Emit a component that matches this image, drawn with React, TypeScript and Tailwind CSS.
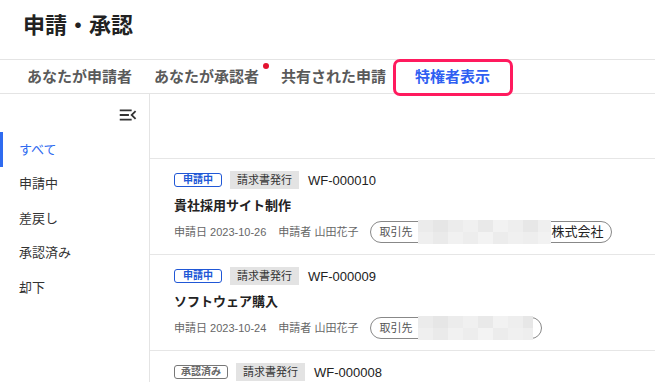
import React from "react";

const blurA = ["#ebebeb", "#e6e6e6", "#ececec", "#f0f0f0", "#e9e9e9", "#f2f2f2", "#eeeeee", "#e7e7e7", "#efefef"];
const blurB = ["#efefef", "#eaeaea", "#f1f1f1", "#ededed", "#f3f3f3", "#ececec", "#f0f0f0", "#eeeeee", "#f2f2f2"];

function Blur({ width }: { width: number }) {
  const cols = Math.ceil(width / 15);
  return (
    <div className="flex h-[24px] flex-col overflow-hidden" style={{ width }}>
      <div className="flex h-[12px]">
        {Array.from({ length: cols }).map((_, i) => (
          <div key={i} className="h-full w-[15px] shrink-0" style={{ background: blurA[i % blurA.length] }} />
        ))}
      </div>
      <div className="flex h-[12px]">
        {Array.from({ length: cols }).map((_, i) => (
          <div key={i} className="h-full w-[15px] shrink-0" style={{ background: blurB[i % blurB.length] }} />
        ))}
      </div>
    </div>
  );
}

type Item = {
  status: string;
  approved?: boolean;
  id: string;
  title: string;
  date: string;
  blurW: number;
  suffix?: string;
};

const items: Item[] = [
  { status: "申請中", id: "WF-000010", title: "貴社採用サイト制作", date: "2023-10-26", blurW: 133, suffix: "株式会社" },
  { status: "申請中", id: "WF-000009", title: "ソフトウェア購入", date: "2023-10-24", blurW: 115 },
  { status: "承認済み", approved: true, id: "WF-000008", title: "", date: "", blurW: 0 },
];

function Card({ it }: { it: Item }) {
  return (
    <div className="h-[96px] shrink-0 border-b border-[#e6e6e6] pl-[24px] pt-[12px]">
      <div className="flex h-[18px] items-center">
        <span
          className={
            it.approved
              ? "flex h-[14px] items-center rounded-[3px] border border-[#777] px-[6px] text-[10px] font-bold leading-none text-[#666]"
              : "flex h-[14px] items-center rounded-[3px] border border-[#2057d6] px-[8px] text-[10px] font-bold leading-none text-[#2057d6]"
          }
        >
          {it.status}
        </span>
        <span className="ml-[8px] flex h-[18px] items-center bg-[#e3e3e3] px-[7px] text-[11px] leading-none text-[#333]">
          請求書発行
        </span>
        <span className="ml-[9px] text-[13px] leading-none text-[#222]">{it.id}</span>
      </div>
      {it.title && (
        <>
          <div className="mt-[8px] h-[18px] text-[13px] font-bold leading-[18px] text-[#222]">{it.title}</div>
          <div className="mt-[6px] flex h-[22px] items-center text-[11px] text-[#666]">
            <span>申請日 {it.date}</span>
            <span className="ml-[12px]">申請者 山田花子</span>
            <div className="ml-[12px] flex h-[22px] items-center rounded-full border border-[#888] pl-[8px] pr-[8px]">
              <span className="mr-[6px] text-[11px] text-[#555]">取引先</span>
              <Blur width={it.blurW} />
              {it.suffix ? (
                <span className="text-[13px] text-[#222]">{it.suffix}</span>
              ) : null}
            </div>
          </div>
        </>
      )}
    </div>
  );
}

export default function App() {
  const side = ["すべて", "申請中", "差戻し", "承認済み", "却下"];
  return (
    <div className="h-[382px] w-[655px] overflow-hidden bg-white font-['Liberation_Sans','Noto_Sans_CJK_JP',sans-serif]">
      <div className="h-[59px] pl-[23px] pt-[12px] text-[22px] font-bold leading-[28px] text-[#222]">申請・承認</div>
      <div className="flex h-[35px] items-center border-y border-[#e4e4e4] pl-[27px] text-[15px] font-bold leading-[33px] text-[#5a5a5a]">
        <div className="w-[127px]">あなたが申請者</div>
        <div className="relative w-[127px]">
          あなたが承認者
          <span className="absolute left-[109px] top-[3px] h-[6px] w-[6px] rounded-full bg-[#e3122f]" />
        </div>
        <div className="w-[134px]">共有された申請</div>
        <div className="relative text-[#2f5ff2]">
          特権者表示
          <span className="absolute -left-[22px] -right-[23px] -top-[1px] -bottom-[3px] rounded-[7px] border-[3px] border-[#ff1a5e]" />
        </div>
      </div>
      <div className="flex h-[288px]">
        <div className="w-[150px] shrink-0 border-r border-[#e4e4e4]">
          <div className="flex h-[38px] items-start justify-end pr-[10px] pt-[10px]">
            <svg width="22" height="22" viewBox="0 0 24 24" fill="#333">
              <path d="M3 18h13v-2H3v2zm0-5h10v-2H3v2zm0-7v2h13V6H3zm18 9.59L17.42 12 21 8.41 19.59 7l-5 5 5 5L21 15.59z" />
            </svg>
          </div>
          <div className="flex flex-col">
            {side.map((s, i) => (
              <div
                key={s}
                className={
                  i === 0
                    ? "flex h-[34.5px] items-center border-l-[3px] border-[#2f6bf0] pl-[16px] text-[13px] text-[#2f6bf0]"
                    : "flex h-[34.5px] items-center pl-[19px] text-[13px] text-[#333]"
                }
              >
                {s}
              </div>
            ))}
          </div>
        </div>
        <div className="flex min-w-0 flex-1 flex-col">
          <div className="h-[65px] shrink-0 border-b border-[#e6e6e6]" />
          {items.map((it) => (
            <Card key={it.id} it={it} />
          ))}
        </div>
      </div>
    </div>
  );
}
